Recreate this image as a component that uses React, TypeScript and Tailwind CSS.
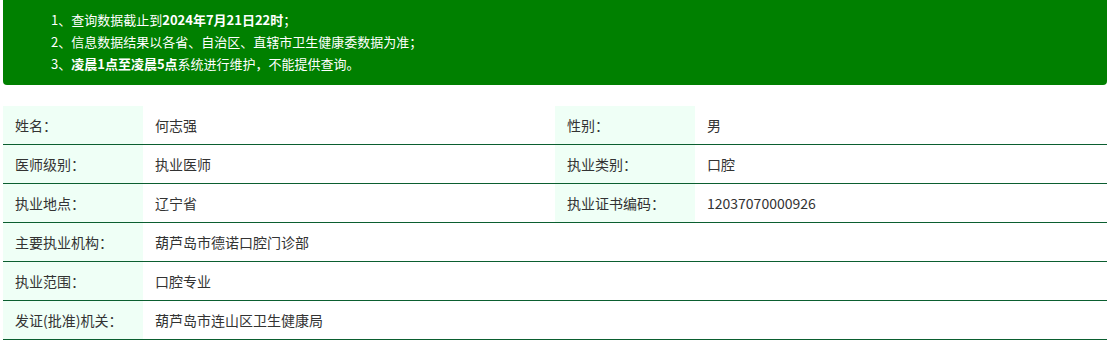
const rows: [string, string, string?, string?][] = [
  ["姓名：", "何志强", "性别：", "男"],
  ["医师级别：", "执业医师", "执业类别：", "口腔"],
  ["执业地点：", "辽宁省", "执业证书编码：", "12037070000926"],
  ["主要执业机构：", "葫芦岛市德诺口腔门诊部"],
  ["执业范围：", "口腔专业"],
  ["发证(批准)机关：", "葫芦岛市连山区卫生健康局"],
];

const Label = ({ text }: { text: string }) => (
  <div className="flex items-center bg-[#effff6] pl-3 h-[38px]">{text}</div>
);

export default function App() {
  return (
    <div className="w-[1104px] ml-[3px] font-['Microsoft_YaHei','Noto_Sans_CJK_SC',sans-serif] text-[#333]">
      <div className="bg-[#008000] text-white text-[13px] leading-[22px] rounded-b-[4px] pl-12 pt-[9px] h-[85px]">
        <p>
          1、查询数据截止到<b>2024年7月21日22时</b>；
        </p>
        <p>2、信息数据结果以各省、自治区、直辖市卫生健康委数据为准；</p>
        <p>
          3、<b>凌晨1点至凌晨5点</b>系统进行维护，不能提供查询。
        </p>
      </div>
      <div className="mt-[21px] text-[14px]">
        {rows.map(([l1, v1, l2, v2]) => (
          <div
            key={l1}
            className="grid grid-cols-[140px_1fr_140px_1fr] border-b border-[#0b5e30]"
          >
            <Label text={l1} />
            {l2 ? (
              <>
                <div className="flex items-center pl-3">{v1}</div>
                <Label text={l2} />
                <div className="flex items-center pl-3">{v2}</div>
              </>
            ) : (
              <div className="col-span-3 flex items-center pl-3">{v1}</div>
            )}
          </div>
        ))}
      </div>
    </div>
  );
}
